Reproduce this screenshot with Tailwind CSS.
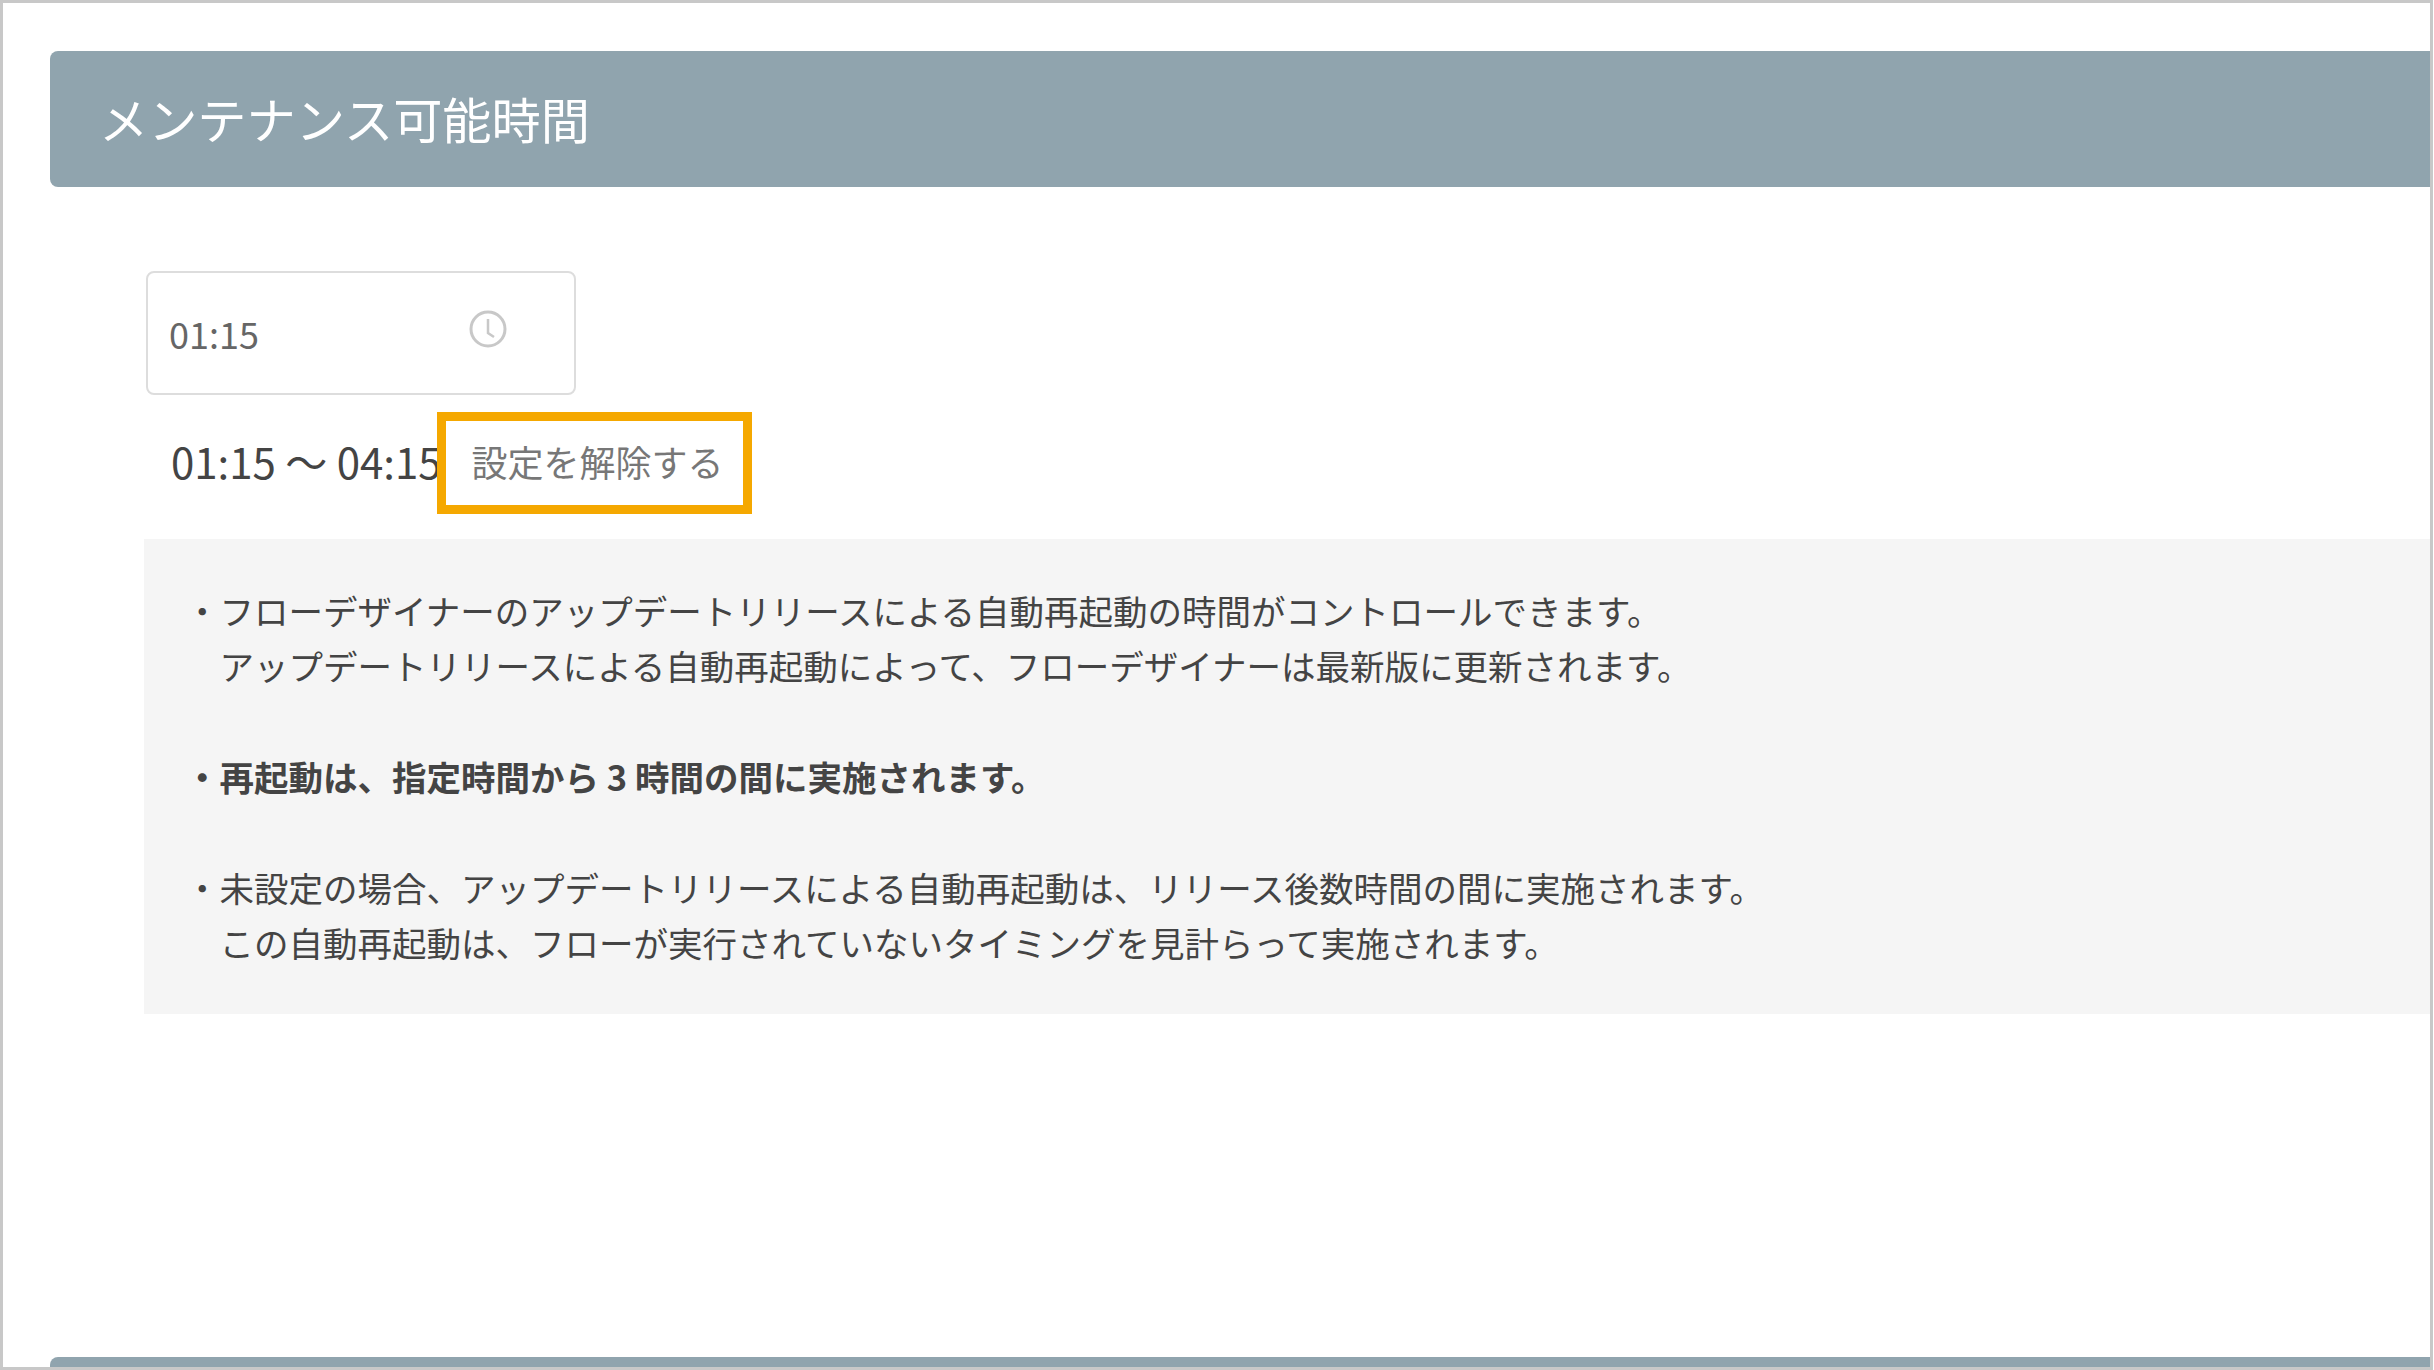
<!DOCTYPE html>
<html lang="ja">
<head>
    <meta charset="UTF-8">
    <title>メンテナンス可能時間</title>
    <script src="https://cdn.jsdelivr.net/npm/@tailwindcss/browser@4"></script>
</head>
<body class="bg-white font-['Noto_Sans_CJK_JP','Noto_Sans',sans-serif] overflow-hidden">
    <div class="w-[2433px] h-[1370px] border-[3px] border-[#c8c8c8] bg-white flex flex-col pt-[48px] pl-[47px] overflow-hidden">
        <!-- section header -->
        <div class="h-[136px] shrink-0 bg-[#90a4ae] rounded-l-lg flex items-center pl-[49px] pb-[3px] text-[49.2px] leading-none text-white">
            メンテナンス可能時間
        </div>

        <div class="pl-[94px] flex flex-col">
            <!-- time input -->
            <div class="mt-[84px] ml-[2px] w-[430px] h-[124px] border-2 border-[#dddddd] rounded-lg relative flex items-center pl-[21px] text-[36px] text-[#666666]">
                01:15
                <svg class="absolute left-[321px] top-[37px] w-[38px] h-[38px]" viewBox="0 0 38 38" fill="none" stroke="#c8c8c8" stroke-width="3">
                    <circle cx="19" cy="19" r="17"/>
                    <path d="M19 9V23L25 27" stroke-width="2.5"/>
                </svg>
            </div>

            <!-- range + clear button -->
            <div class="mt-[17px] ml-[27px] flex items-center h-[102px]">
                <span class="w-[266px] pb-[4px] text-[42px] leading-none text-[#444444] whitespace-nowrap">01:15 〜 04:15</span>
                <button class="w-[315px] h-[102px] border-[9px] border-[#f5a800] bg-white pl-[6px] pb-[4px] text-[36px] leading-none text-[#777777] text-center whitespace-nowrap">設定を解除する</button>
            </div>

            <!-- notes -->
            <div class="mt-[25px] h-[475px] bg-[#f5f5f5] pt-[43.5px] pl-[41px] text-[34.5px] leading-[55.4px] text-[#444444] whitespace-nowrap">
                ・フローデザイナーのアップデートリリースによる自動再起動の時間がコントロールできます。<br>
                　アップデートリリースによる自動再起動によって、フローデザイナーは最新版に更新されます。<br>
                <br>
                <span class="font-bold">・再起動は、指定時間から 3 時間の間に実施されます。</span><br>
                <br>
                ・未設定の場合、アップデートリリースによる自動再起動は、リリース後数時間の間に実施されます。<br>
                　この自動再起動は、フローが実行されていないタイミングを見計らって実施されます。
            </div>
        </div>

        <!-- next section header, cut off by the frame -->
        <div class="mt-auto h-[10px] shrink-0 bg-[#90a4ae] rounded-tl-lg"></div>
    </div>
</body>
</html>
